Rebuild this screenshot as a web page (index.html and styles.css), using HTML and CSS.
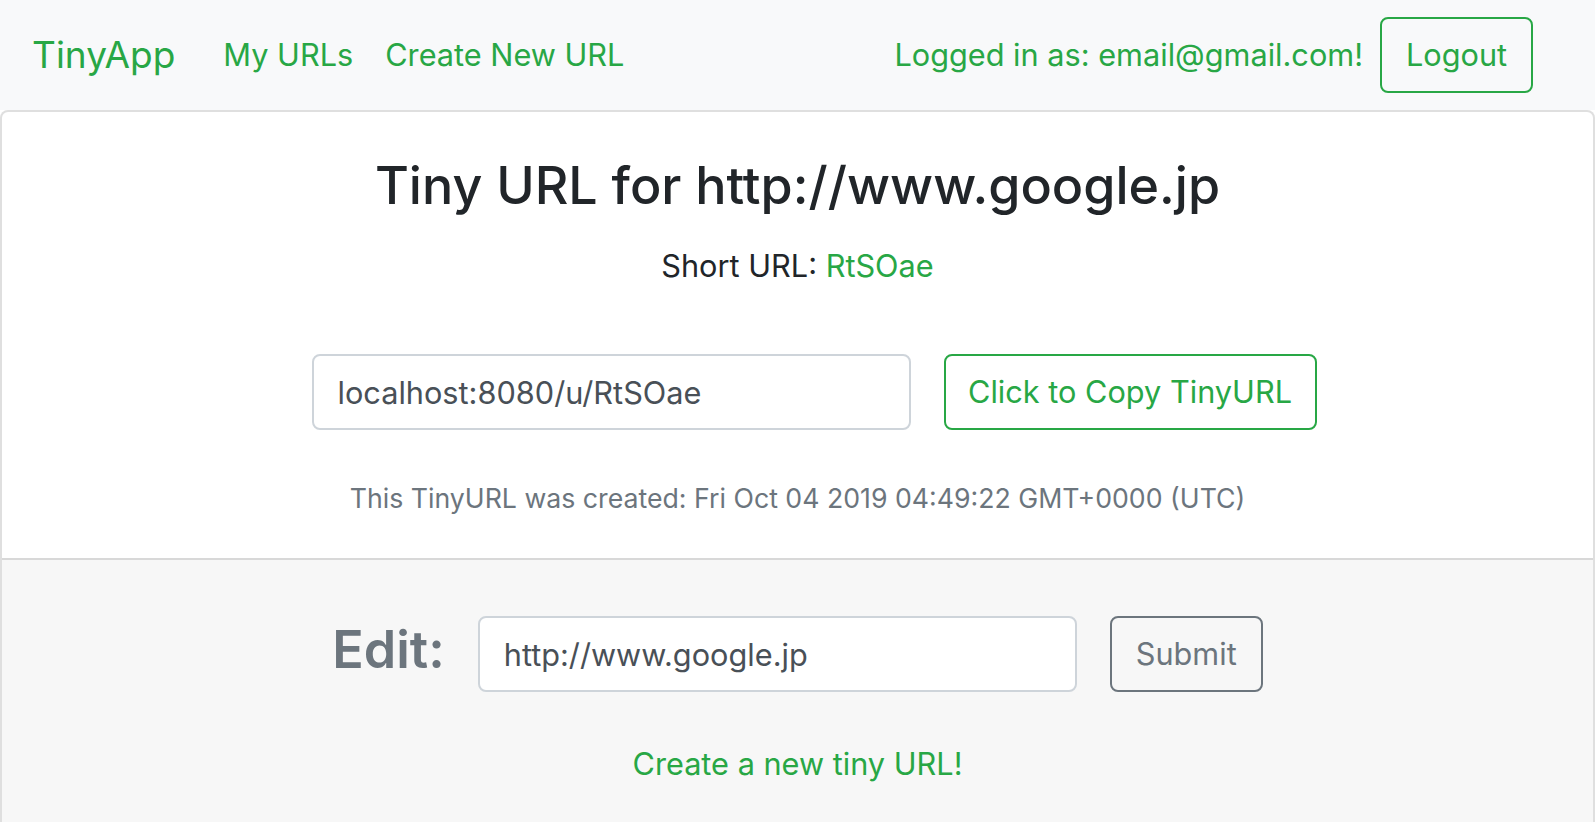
FILE: index.html
```html
<!DOCTYPE html>
<html lang="en">
<head>
<meta charset="utf-8">
<title>TinyApp</title>
<link rel="stylesheet" href="styles.css">
</head>
<body>
<nav class="navbar">
  <a class="brand" href="#">TinyApp</a>
  <div class="nav-links">
    <a class="nav-link" href="#">My URLs</a>
    <a class="nav-link" href="#">Create New URL</a>
  </div>
  <div class="nav-right">
    <span class="user-text">Logged in as: email@gmail.com!</span>
    <button class="btn btn-success-outline btn-logout" type="button">Logout</button>
  </div>
</nav>
<main class="card">
  <section class="card-body">
    <h3 class="title">Tiny URL for http://www.google.jp</h3>
    <p class="short">Short URL: <a class="green-link" href="#">RtSOae</a></p>
    <div class="copy-row">
      <input class="form-control copy-input" type="text" value="localhost:8080/u/RtSOae" readonly>
      <button class="btn btn-success-outline btn-copy" type="button">Click to Copy TinyURL</button>
    </div>
    <p class="created">This TinyURL was created: Fri Oct 04 2019 04:49:22 GMT+0000 (UTC)</p>
  </section>
  <footer class="card-footer">
    <form class="edit-row">
      <h4 class="edit-label">Edit:</h4>
      <input class="form-control edit-input" type="text" value="http://www.google.jp">
      <button class="btn btn-secondary-outline btn-submit" type="button">Submit</button>
    </form>
    <p class="new-link"><a class="green-link" href="#">Create a new tiny URL!</a></p>
  </footer>
</main>
</body>
</html>
```

FILE: styles.css
```css
html {
  overflow: hidden;
}

body {
  margin: 0;
  font-family: "Inter", "Liberation Sans", sans-serif;
  font-size: 30.7px;
  line-height: 1.5;
  color: #212529;
  background: #ffffff;
}

a {
  text-decoration: none;
}

.navbar {
  display: flex;
  align-items: center;
  height: 110px;
  box-sizing: border-box;
  padding: 0 62px 0 32px;
  background: #f8f9fa;
}

.brand {
  font-size: 37px;
  color: #28a745;
  margin-right: 32px;
  line-height: 1.5;
}

.nav-links {
  display: flex;
}

.nav-link {
  color: #28a745;
  padding: 0 16px;
}

.nav-right {
  margin-left: auto;
  display: flex;
  align-items: center;
  gap: 17px;
}

.user-text {
  color: #28a745;
}

.btn {
  box-sizing: border-box;
  height: 76px;
  padding: 0 20px;
  font-family: inherit;
  font-size: 30.7px;
  line-height: 1.5;
  background: transparent;
  border-radius: 8px;
  border: 2px solid;
  text-align: center;
  cursor: pointer;
}

.btn-success-outline {
  color: #28a745;
  border-color: #28a745;
}

.btn-secondary-outline {
  color: #6c757d;
  border-color: #6c757d;
}

.btn-logout {
  width: 153px;
}

.btn-copy {
  width: 373px;
}

.btn-submit {
  width: 153px;
}

.card {
  display: block;
  border: 2px solid rgba(0, 0, 0, 0.125);
  border-radius: 8px;
  background: #ffffff;
  margin: 0;
}

.card-body {
  padding: 40px 40px 39px;
  text-align: center;
}

.title {
  margin: 0 0 22px;
  font-size: 52px;
  font-weight: 500;
  line-height: 68px;
  color: #212529;
}

.short {
  margin: 0 0 64px;
  line-height: 48px;
}

.green-link {
  color: #28a745;
}

.copy-row {
  display: flex;
  justify-content: center;
  margin-bottom: 47px;
}

.form-control {
  box-sizing: border-box;
  height: 76px;
  width: 599px;
  padding: 0 24px;
  font-family: inherit;
  font-size: 30.7px;
  color: #495057;
  background: #ffffff;
  border: 2px solid #ced4da;
  border-radius: 8px;
  outline: none;
}

.copy-input {
  margin: 0 33px;
}

.created {
  margin: 0;
  font-size: 26.7px;
  line-height: 42px;
  color: #6c757d;
}

.card-footer {
  border-top: 2px solid rgba(0, 0, 0, 0.125);
  background: rgba(0, 0, 0, 0.03);
  padding: 56px 40px 60px;
  text-align: center;
}

.edit-row {
  display: flex;
  justify-content: center;
  align-items: center;
  gap: 33px;
  margin: 0;
}

.edit-label {
  margin: 0 0 7px;
  font-size: 52px;
  font-weight: 600;
  line-height: 1.2;
  color: #6c757d;
}

.new-link {
  margin: 48px 0 0;
  line-height: 48px;
}
```
